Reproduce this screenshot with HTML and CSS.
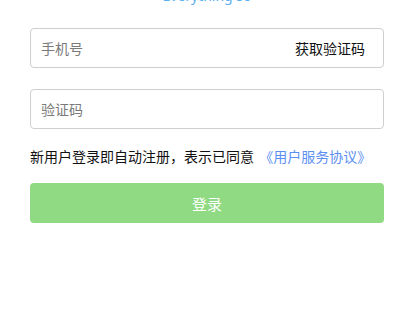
FILE: index.html
```html
<!DOCTYPE html>
<html lang="zh-CN">
<head>
<meta charset="utf-8">
<link rel="stylesheet" href="styles.css">
</head>
<body>
<div class="page">
  <p class="slogan">Everything so</p>
  <form class="form">
    <div class="field">
      <input class="input" type="text" placeholder="手机号">
      <span class="code-btn">获取验证码</span>
    </div>
    <div class="field">
      <input class="input" type="text" placeholder="验证码">
    </div>
    <p class="agree">新用户登录即自动注册，表示已同意 <a class="link">《用户服务协议》</a></p>
    <button class="submit" type="button">登录</button>
  </form>
</div>
</body>
</html>
```
FILE: styles.css
```css
html, body {
  margin: 0;
  padding: 0;
  background: #fff;
}
body {
  font-family: "Noto Sans CJK SC", "Noto Sans", sans-serif;
  overflow: hidden;
}
.page {
  padding: 0 27px 0 30px;
}
.slogan {
  margin: -14px 0 0;
  height: 20px;
  line-height: 20px;
  font-family: "Noto Sans", sans-serif;
  font-size: 14px;
  color: #5aaff0;
  text-align: center;
}
.form {
  display: flex;
  flex-direction: column;
  margin-top: 22px;
}
.field {
  display: flex;
  align-items: center;
  height: 40px;
  box-sizing: border-box;
  border: 1px solid #cfcfcf;
  border-radius: 4px;
  padding: 0 18px 0 10px;
  margin-bottom: 21px;
}
.field + .field {
  margin-bottom: 0;
}
.input {
  flex: 1;
  min-width: 0;
  border: none;
  outline: none;
  padding: 0;
  font-family: inherit;
  font-size: 14px;
  color: #333;
  background: transparent;
}
.input::placeholder {
  color: #7a7a7a;
}
.code-btn {
  font-size: 14px;
  color: #111;
}
.agree {
  margin: 16px 0 0;
  line-height: 22px;
  font-size: 14px;
  color: #111;
}
.link {
  color: #5b8ff2;
  margin-left: 2px;
}
.submit {
  margin-top: 16px;
  height: 40px;
  border: none;
  border-radius: 4px;
  background: #8fda82;
  color: #fff;
  font-family: inherit;
  font-size: 15px;
}
```
